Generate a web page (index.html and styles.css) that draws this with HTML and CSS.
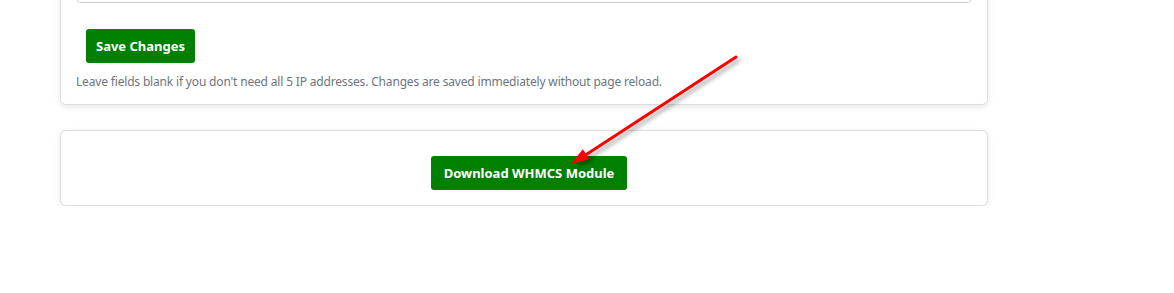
FILE: index.html
```html
<!DOCTYPE html>
<html lang="en">
<head>
  <meta charset="UTF-8" />
  <meta name="viewport" content="width=device-width, initial-scale=1.0"/>
  <title>WHMCS Module</title>
  <link rel="stylesheet" href="styles.css">
</head>
<body>

  <div class="wrap">
    <div class="card card-ips">
      <input class="field" type="text" value="">
      <div class="actions">
        <button class="btn">Save Changes</button>
      </div>
      <p class="help">Leave fields blank if you don't need all 5 IP addresses. Changes are saved immediately without page reload.</p>
    </div>

    <div class="card card-download">
      <button class="btn">Download WHMCS Module</button>
    </div>
  </div>

  <svg class="arrow" width="1174" height="293" viewBox="0 0 1174 293">
    <line x1="736" y1="57" x2="584" y2="156" stroke="#ff0000" stroke-width="3" stroke-linecap="round"/>
    <polygon points="571,164 589.4,159.2 582.8,149.2" fill="#ff0000"/>
  </svg>

</body>
</html>
```

FILE: styles.css
```css
body {
  margin: 0;
  font-family: "Noto Sans", "Open Sans", Arial, sans-serif;
  background-color: #fff;
  overflow: hidden;
}

.wrap {
  width: 928px;
  margin-left: 60px;
}

.card {
  background-color: #fff;
  border: 1px solid #dedede;
  border-radius: 6px;
  box-shadow: 0 2px 6px rgba(0, 0, 0, 0.1);
  box-sizing: border-box;
}

.card-ips {
  margin-top: -60px;
  padding: 20px 15px 13px;
}

.field {
  display: block;
  width: 100%;
  height: 42px;
  box-sizing: border-box;
  border: 1px solid #ccc;
  border-radius: 5px;
}

.actions {
  margin-top: 16px;
  padding: 10px 10px 0;
}

.btn {
  font-family: inherit;
  font-size: 13px;
  font-weight: bold;
  line-height: 18px;
  padding: 8px 10px;
  background-color: #008000;
  color: white;
  border: none;
  border-radius: 3px;
  cursor: pointer;
}

.help {
  margin: 9px 0 0;
  font-size: 12px;
  line-height: 19px;
  letter-spacing: -0.17px;
  color: #6c757d;
}

.card-download {
  margin-top: 25px;
  padding: 25px 15px 15px;
  text-align: center;
}

.card-download .btn {
  margin-left: 10px;
  padding: 8px 13px;
}

.arrow {
  position: absolute;
  left: 0;
  top: 0;
  pointer-events: none;
  filter: drop-shadow(3px 3px 2px rgba(0, 0, 0, 0.35));
}
```
